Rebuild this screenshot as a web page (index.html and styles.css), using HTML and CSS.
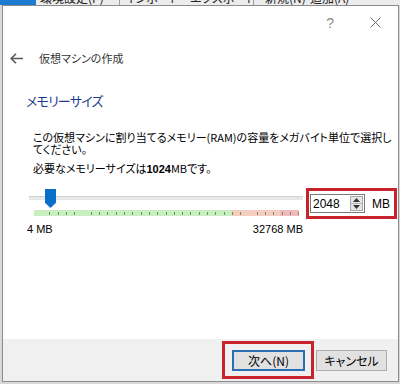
FILE: index.html
```html
<!DOCTYPE html>
<html lang="ja">
<head>
<meta charset="utf-8">
<title>仮想マシンの作成</title>
<link rel="stylesheet" href="styles.css">
</head>
<body>
<div class="strip">
  <div class="strip-sel"></div>
  <span class="tab t1">環境設定(P)</span>
  <span class="sep"></span>
  <span class="tab t2">インポート</span>
  <span class="tab t3">エクスポート</span>
  <span class="sep"></span>
  <span class="tab t4">新規(N)</span>
  <span class="tab t5">追加(A)</span>
</div>
<div class="dialog">
  <div class="content">
    <div class="titlebar">
      <span class="help">?</span>
      <svg class="close" width="11" height="11" viewBox="0 0 11 11"><path d="M0.5 0.5 L10.5 10.5 M10.5 0.5 L0.5 10.5" stroke="#6f6f6f" stroke-width="1" fill="none"/></svg>
    </div>
    <div class="header">
      <svg class="back" width="13" height="11" viewBox="0 0 13 11"><path d="M1.2 5.5 H13 M6 0.8 L1.2 5.5 L6 10.2" stroke="#5a5a5a" stroke-width="1.6" fill="none"/></svg>
      <span class="title">仮想マシンの作成</span>
    </div>
    <h1 class="heading">メモリーサイズ</h1>
    <p class="desc">この仮想マシンに割り当てるメモリー(RAM)の容量をメガバイト単位で選択し<br>てください。</p>
    <p class="req">必要なメモリーサイズは<b>1024</b>MBです。</p>
    <div class="slider-row">
      <div class="slider">
        <div class="track"></div>
        <div class="ticks"></div>
        <div class="thumb"></div>
      </div>
      <div class="mark spin-mark">
        <div class="spinbox">
          <span class="val">2048</span>
          <div class="spin">
            <span class="arrow"><svg width="7" height="4" viewBox="0 0 7 4"><path d="M0 4 L3.5 0 L7 4 Z" fill="#333"/></svg></span>
            <span class="arrow"><svg width="7" height="4" viewBox="0 0 7 4"><path d="M0 0 L3.5 4 L7 0 Z" fill="#333"/></svg></span>
          </div>
        </div>
        <span class="unit">MB</span>
      </div>
    </div>
    <div class="scale"><span>4 MB</span><span>32768 MB</span></div>
  </div>
  <div class="footer">
    <div class="mark next-mark"><button class="btn default">次へ(N)</button></div>
    <button class="btn cancel">キャンセル</button>
  </div>
</div>
</body>
</html>
```
FILE: styles.css
```css
html, body {
  margin: 0;
  padding: 0;
}
body {
  width: 400px;
  height: 384px;
  overflow: hidden;
  background: #d9d9d9;
  font-family: "Noto Sans CJK JP", sans-serif;
  font-feature-settings: "palt";
  color: #000;
}

/* background app toolbar strip */
.strip {
  height: 5px;
  display: flex;
  overflow: hidden;
  background: #ececec;
}
.strip-sel {
  width: 36px;
  flex: none;
  background: #1a7bd0;
}
.tab {
  flex: none;
  font-size: 12px;
  line-height: 12px;
  margin-top: -8px;
  color: #222;
  white-space: nowrap;
  overflow: hidden;
  box-sizing: border-box;
}
.t1 { width: 83px; padding-left: 4px; }
.t2 { width: 65px; padding-left: 5px; }
.t3 { width: 68px; padding-left: 5px; }
.t4 { width: 51px; padding-left: 11px; }
.t5 { width: 60px; padding-left: 5px; }
.sep {
  flex: none;
  width: 1px;
  background: #a0a0a0;
}

/* dialog */
.dialog {
  margin-left: 2px;
  width: 395px;
  height: 375px;
  border: 1px solid #8c8c8c;
  background: #fff;
  display: flex;
  flex-direction: column;
}
.content {
  flex: 1;
}
.titlebar {
  height: 32px;
  display: flex;
  align-items: center;
  justify-content: flex-end;
  padding-right: 17px;
}
.help {
  font-family: "Liberation Sans", sans-serif;
  font-size: 14px;
  color: #8a8a8a;
  margin-right: 36px;
  line-height: 14px;
  margin-top: 2px;
}
.close {
  display: block;
}
.header {
  height: 40px;
  display: flex;
  align-items: center;
  padding-left: 7px;
}
.back {
  display: block;
  margin-right: 16px;
}
.title {
  font-size: 11px;
  color: #333;
}
.heading {
  margin: 13px 0 0 23px;
  font-size: 13px;
  letter-spacing: -0.8px;
  line-height: 20px;
  font-weight: normal;
  color: #1c3b8c;
}
.desc {
  margin: 20px 0 0 30px;
  font-size: 11px;
  line-height: 12px;
  white-space: nowrap;
}
.req {
  margin: 7px 0 0 30px;
  font-size: 11px;
  line-height: 12px;
  white-space: nowrap;
}
.req b {
  font-family: "Liberation Sans", sans-serif;
  font-weight: bold;
}

/* slider */
.slider-row {
  margin-top: 12px;
  padding-left: 26px;
  display: flex;
  align-items: flex-start;
}
.slider {
  position: relative;
  width: 274px;
  height: 32px;
  flex: none;
}
.track {
  margin-top: 9px;
  height: 4px;
  box-sizing: border-box;
  background: #e7e7e7;
  border-top: 1px solid #d2d2d2;
}
.ticks {
  margin: 10px 0 0 5px;
  width: 265px;
  height: 6px;
  background-image:
    repeating-linear-gradient(90deg, transparent 0, transparent 7.3px, #6f8a6f 7.3px, #6f8a6f 8.3px),
    linear-gradient(90deg, #c8efc0 0, #c8efc0 198px, #f5cdbf 198px, #f5cdbf 246px, #f0b9bb 246px);
  background-size: 100% 3px, 100% 100%;
  background-position: 8px center, 0 0;
  background-repeat: no-repeat;
}
.thumb {
  position: absolute;
  left: 16px;
  top: 2px;
  width: 11px;
  height: 19px;
  background: #0b6ec6;
  clip-path: polygon(0 0, 100% 0, 100% 72%, 50% 100%, 0 72%);
}

/* red annotation boxes */
.mark {
  border: 3px solid #c8232c;
  box-sizing: border-box;
}
.spin-mark {
  flex: none;
  margin: 1px 0 0 3px;
  width: 91px;
  height: 31px;
  display: flex;
  align-items: center;
  padding-left: 1px;
}
.spinbox {
  width: 55px;
  height: 19px;
  box-sizing: border-box;
  border: 1px solid #7a7a7a;
  display: flex;
  align-items: center;
  background: #fff;
}
.val {
  flex: 1;
  padding-left: 2px;
  font-family: "Liberation Sans", sans-serif;
  font-size: 12px;
  line-height: 14px;
}
.spin {
  width: 13px;
  height: 15px;
  box-sizing: border-box;
  margin-right: 1px;
  border: 1px solid #a8a8a8;
  background: #e6e6e6;
  display: flex;
  flex-direction: column;
}
.arrow {
  flex: 1;
  display: flex;
  align-items: center;
  justify-content: center;
}
.arrow + .arrow {
  border-top: 1px solid #b5b5b5;
}
.arrow svg {
  display: block;
}
.unit {
  margin-left: 7px;
  font-family: "Liberation Sans", sans-serif;
  font-size: 12px;
}
.scale {
  margin: 4px 0 0 24px;
  width: 276px;
  display: flex;
  justify-content: space-between;
  font-family: "Liberation Sans", sans-serif;
  font-size: 11px;
  line-height: 12px;
}

/* footer */
.footer {
  height: 42px;
  flex: none;
  background: #f0f0f0;
  display: flex;
  align-items: center;
  justify-content: flex-end;
  padding-right: 11px;
}
.next-mark {
  padding: 6px 6px 5px 7px;
  width: 92px;
  height: 38px;
}
.btn {
  display: block;
  margin: 0;
  height: 21px;
  box-sizing: border-box;
  background: #e1e1e1;
  border: 1px solid #adadad;
  font-family: "Noto Sans CJK JP", sans-serif;
  font-feature-settings: "palt";
  font-size: 12px;
  line-height: 17px;
  padding: 0;
  color: #000;
}
.default {
  width: 73px;
  border: 2px solid #2a6fb3;
}
.cancel {
  width: 71px;
  margin-left: 2px;
}
```
